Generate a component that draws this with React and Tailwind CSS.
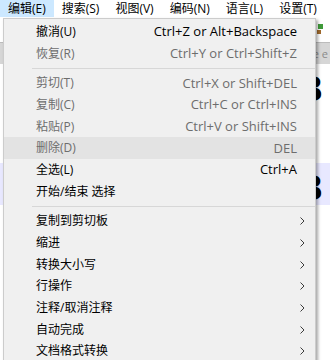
import React from 'react'

const font = { fontFamily: '"Segoe UI", "Open Sans", "Noto Sans CJK SC", sans-serif' }

const topMenus = ['编辑(E)', '搜索(S)', '视图(V)', '编码(N)', '语言(L)', '设置(T)', '工具(O)']

const items = [
  { label: '撤消(U)', keys: 'Ctrl+Z or Alt+Backspace' },
  { label: '恢复(R)', keys: 'Ctrl+Y or Ctrl+Shift+Z', off: true },
  { sep: true },
  { label: '剪切(T)', keys: 'Ctrl+X or Shift+DEL', off: true },
  { label: '复制(C)', keys: 'Ctrl+C or Ctrl+INS', off: true },
  { label: '粘贴(P)', keys: 'Ctrl+V or Shift+INS', off: true },
  { label: '删除(D)', keys: 'DEL', off: true, hover: true },
  { label: '全选(L)', keys: 'Ctrl+A' },
  { label: '开始/结束 选择' },
  { sep: true },
  { label: '复制到剪切板', sub: true },
  { label: '缩进', sub: true },
  { label: '转换大小写', sub: true },
  { label: '行操作', sub: true },
  { label: '注释/取消注释', sub: true },
  { label: '自动完成', sub: true },
  { label: '文档格式转换', sub: true },
]

function Chevron() {
  return (
    <svg width="5" height="8" viewBox="0 0 5 8" className="shrink-0">
      <polyline points="0.5,0.5 4,4 0.5,7.5" fill="none" stroke="#3c3c3c" strokeWidth="1" />
    </svg>
  )
}

function MenuRow({ item }) {
  if (item.sep) {
    return (
      <div className="h-[8px] flex items-center">
        <div className="ml-[28px] flex-1 h-px bg-[#d7d7d7]" />
      </div>
    )
  }
  return (
    <div
      className={`h-[21.7px] flex items-center justify-between pl-[32px] ${
        item.sub ? 'pr-[10px]' : 'pr-[18px]'
      } ${item.hover ? 'bg-[#e3e3e3]' : ''} ${item.off ? 'text-[#6d6d6d]' : 'text-black'}`}
    >
      <span>{item.label}</span>
      {item.keys && <span className="text-[13px]">{item.keys}</span>}
      {item.sub && <Chevron />}
    </div>
  )
}

export default function App() {
  return (
    <div style={font} className="relative w-[330px] h-[360px] overflow-hidden bg-white text-[12px] leading-none">
      <div className="flex h-[17px] items-stretch whitespace-nowrap">
        {topMenus.map((m, i) => (
          <div key={m} className={`flex items-center px-[8px] ${i === 0 ? 'bg-[#cce8ff]' : ''}`}>
            {m}
          </div>
        ))}
      </div>

      <div className="h-[25px] flex items-center justify-end pr-[6px]">
        <svg width="8" height="12" viewBox="0 0 8 12">
          <rect x="2" y="0" width="5" height="5" fill="#3f9b3a" />
          <rect x="1" y="6" width="4" height="4" fill="#a06a2c" />
        </svg>
      </div>

      <div className="h-[22px] flex items-center justify-end bg-[#d6d6d6] border-t border-[#bcbcbc] pr-[2px] text-[#8a8a8a] text-[11px]">
        re e
      </div>

      <div className="flex flex-col">
        <div className="h-[49px] flex items-center justify-end pr-[7px] text-[34px] font-bold text-black" style={{ fontFamily: '"DejaVu Serif", serif' }}>
          8
        </div>
        <div className="h-[50px]" />
        <div className="h-[42px] flex items-end justify-end pr-[7px] bg-[#e8e8ff] text-[34px] font-bold text-black" style={{ fontFamily: '"DejaVu Serif", serif' }}>
          8
        </div>
      </div>

      <div className="absolute left-[3px] top-[18px] w-[313px] pt-[2px] bg-[#f0f0f0] border border-[#cccccc] shadow-[2px_2px_3px_rgba(0,0,0,0.35)] whitespace-nowrap">
        {items.map((item, i) => (
          <MenuRow key={i} item={item} />
        ))}
      </div>
    </div>
  )
}
